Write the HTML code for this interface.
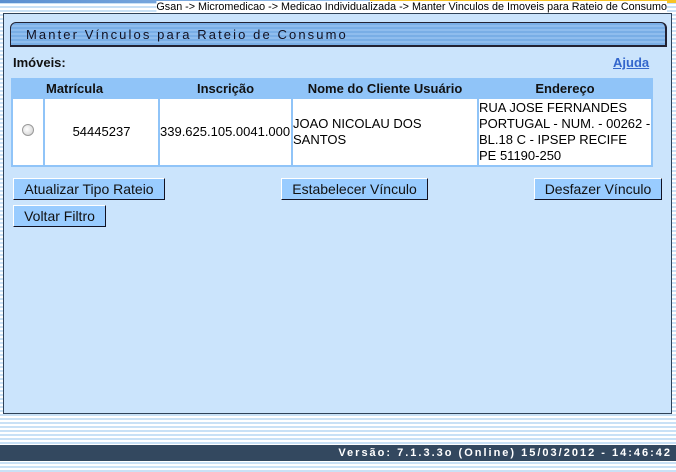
<!DOCTYPE html>
<html><head><meta charset="utf-8"><style>
*{margin:0;padding:0;box-sizing:border-box}
body{width:676px;height:472px;overflow:hidden;position:relative;font-family:"Liberation Sans",Arial,sans-serif;
background:repeating-linear-gradient(to bottom,#fff 0,#fff 2px,#c9e1f6 2px,#c9e1f6 4px);}
.top{position:absolute;left:0;top:0;width:676px;height:3px;background:linear-gradient(to right,#5a8fd0,#9cc4ee 370px,#f7c325 370px,#f7c325)}
.crumb{position:absolute;right:9px;top:1px;font-size:11px;line-height:12px;color:#000;background:#fff;white-space:nowrap;transform:scaleX(.98);transform-origin:right}
.panel{position:absolute;left:3px;top:13px;width:669px;height:401px;background:#cbe4fc;border:1px solid #2f4258}
.tab{position:absolute;left:6px;top:8px;width:657px;height:25px;border:1px solid #223;border-top-left-radius:6px 6px;border-top-right-radius:6px;
background:repeating-linear-gradient(to bottom,#79aee6 0,#79aee6 2px,#8fbdee 2px,#8fbdee 4px);border-right-width:2px;border-bottom-width:2px}
.tab span{position:absolute;left:15px;top:4px;font-size:13px;letter-spacing:2.1px;color:#112}
.lbl{position:absolute;left:9px;top:41px;font-size:13px;font-weight:bold;color:#111}
.ajuda{position:absolute;left:609px;top:41px;font-size:13px;font-weight:bold;color:#3366cc;text-decoration:underline}
table{position:absolute;left:7px;top:64px;width:642px;border-collapse:separate;border-spacing:2px;background:#90c4f8;font-size:13px;table-layout:fixed}
th{height:17px;background:#90c4f8;font-size:13px;color:#111}
td{background:#fff;height:66px;color:#000;line-height:16px;overflow:hidden;white-space:normal}
.radio{display:inline-block;width:12px;height:12px;border-radius:50%;border:1px solid #999;background:radial-gradient(circle at 40% 40%,#fff,#ccc)}
.btn{position:absolute;height:22px;background:#99ccff;border:1px solid;border-color:#fff #112 #112 #fff;font-size:14px;color:#111;text-align:center;line-height:20px;white-space:nowrap}
.foot{position:absolute;left:0;top:445px;width:676px;height:16px;background:#33485f;color:#fff;font-size:11px;font-weight:bold;letter-spacing:2px;text-align:right;padding-right:4px;line-height:16px}
</style></head><body>
<div class="top"></div>
<div class="crumb">Gsan -&gt; Micromedicao -&gt; Medicao Individualizada -&gt; Manter Vinculos de Imoveis para Rateio de Consumo</div>
<div class="panel">
<div class="tab"><span>Manter Vínculos para Rateio de Consumo</span></div>
<div class="lbl">Imóveis:</div>
<div class="ajuda">Ajuda</div>
<table>
<colgroup><col style="width:30px"><col style="width:113px"><col style="width:131px"><col style="width:184px"><col></colgroup>
<tr><th></th><th style="text-align:left;padding-left:1px">Matrícula</th><th>Inscrição</th><th>Nome do Cliente Usuário</th><th>Endereço</th></tr>
<tr><td style="text-align:center"><span class="radio"></span></td><td style="text-align:center">54445237</td><td style="white-space:nowrap">339.625.105.0041.000</td><td>JOAO NICOLAU DOS SANTOS</td><td style="white-space:nowrap">RUA JOSE FERNANDES<br>PORTUGAL - NUM. - 00262 -<br>BL.18 C - IPSEP RECIFE<br>PE 51190-250</td></tr>
</table>
<div class="btn" style="left:9px;top:164px;width:152px">Atualizar Tipo Rateio</div>
<div class="btn" style="left:9px;top:191px;width:93px">Voltar Filtro</div>
<div class="btn" style="left:277px;top:164px;width:147px">Estabelecer Vínculo</div>
<div class="btn" style="left:530px;top:164px;width:128px">Desfazer Vínculo</div>
</div>
<div class="foot">Versão: 7.1.3.3o (Online) 15/03/2012 - 14:46:42</div>
</body></html>
